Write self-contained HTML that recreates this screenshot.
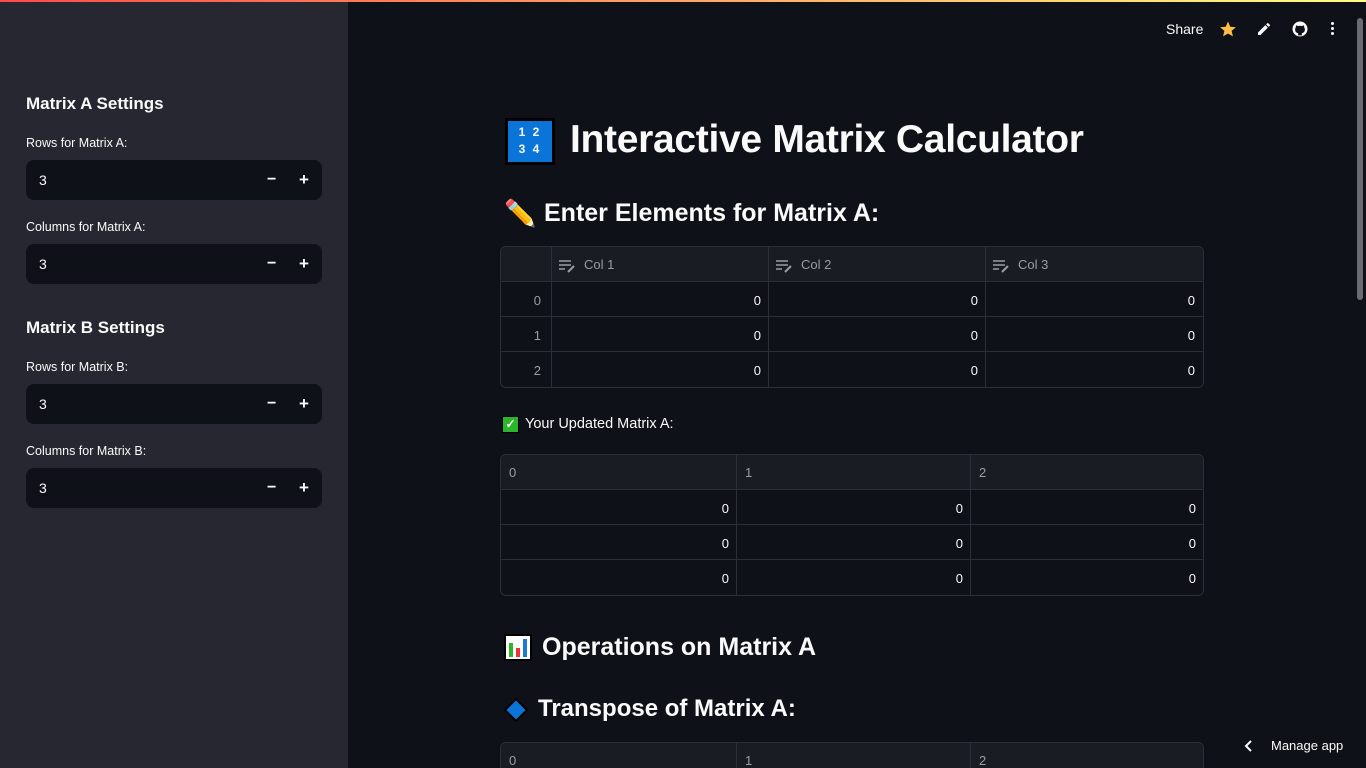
<!DOCTYPE html>
<html><head><meta charset="utf-8"><style>
*{box-sizing:border-box;margin:0;padding:0}
html,body{width:1366px;height:768px;overflow:hidden}
body{background:#0e1117;font-family:"Liberation Sans",sans-serif;color:#fafafa;position:relative}
.a{position:absolute}
.top{left:0;top:0;width:1366px;height:2px;background:linear-gradient(90deg,#ff4b4b,#fffd80)}
.side{left:0;top:2px;width:348px;height:766px;background:#262730}
.sh{font-weight:bold;font-size:17px;left:26px}
.lb{font-size:12.5px;left:26px}
.inp{left:26px;width:296px;height:40px;background:#0e1117;border-radius:8px}
.inp .v{position:absolute;left:13px;top:12px;font-size:14px}
.inp .m{position:absolute;left:241px;top:11px;font-size:16px;font-weight:bold}
.inp .p{position:absolute;left:273px;top:10px;font-size:17px;font-weight:bold}
.tbl{border:1px solid #2c2e38;border-radius:6px;overflow:hidden}
.row{position:absolute;left:0;height:35px;width:100%;border-top:1px solid #2c2e38}
.c{position:absolute;top:0;height:35px;border-left:1px solid #2c2e38;font-size:13px;line-height:37px}
.hd{background:#1a1c23;color:#9b9da6}
.num{text-align:right;padding-right:8px}
</style></head><body>
<div class="a top"></div>
<div class="a side"></div>
<div class="a sh" style="top:94px">Matrix A Settings</div>
<div class="a lb" style="top:136px">Rows for Matrix A:</div>
<div class="a inp" style="top:160px"><span class="v">3</span><span class="m">−</span><span class="p">+</span></div>
<div class="a lb" style="top:220px">Columns for Matrix A:</div>
<div class="a inp" style="top:244px"><span class="v">3</span><span class="m">−</span><span class="p">+</span></div>
<div class="a sh" style="top:318px">Matrix B Settings</div>
<div class="a lb" style="top:360px">Rows for Matrix B:</div>
<div class="a inp" style="top:384px"><span class="v">3</span><span class="m">−</span><span class="p">+</span></div>
<div class="a lb" style="top:444px">Columns for Matrix B:</div>
<div class="a inp" style="top:468px"><span class="v">3</span><span class="m">−</span><span class="p">+</span></div>

<div class="a" style="left:1166px;top:21px;font-size:14px">Share</div>
<svg class="a" style="left:1219px;top:20px" width="18" height="18" viewBox="0 0 24 24"><path fill="#ffbd45" d="M12 2l3 7 7.5.6-5.7 4.9 1.8 7.4L12 18l-6.6 3.9 1.8-7.4L1.5 9.6 9 9z"/></svg>
<svg class="a" style="left:1256px;top:21px" width="16" height="16" viewBox="0 0 24 24"><path fill="#fafafa" d="M3 17.25V21h3.75L17.8 9.94l-3.75-3.75zM20.7 7.04a1 1 0 000-1.41l-2.34-2.34a1 1 0 00-1.41 0l-1.83 1.83 3.75 3.75z"/></svg>
<svg class="a" style="left:1291px;top:20px" width="18" height="18" viewBox="0 0 24 24"><circle cx="12" cy="12" r="10" fill="#fafafa"/><path fill="#0e1117" d="M9.5 20.5v-3c-2.5-.5-4-2-4-5 0-1.2.4-2.2 1.1-3-.2-.6-.2-1.5.1-2.4 1 0 2 .6 2.6 1.1a8 8 0 015.4 0c.6-.5 1.6-1.1 2.6-1.1.3.9.3 1.8.1 2.4.7.8 1.1 1.8 1.1 3 0 3-1.5 4.5-4 5v3z"/></svg>
<div class="a" style="left:1331px;top:22px;width:4px">
<div style="width:3px;height:3px;background:#fafafa;border-radius:2px;margin-bottom:2px"></div><div style="width:3px;height:3px;background:#fafafa;border-radius:2px;margin-bottom:2px"></div><div style="width:3px;height:3px;background:#fafafa;border-radius:2px"></div></div>
<div class="a" style="left:1357px;top:18px;width:6px;height:282px;background:#6b6c72;border-radius:3px"></div>

<div class="a" style="left:505px;top:118px;width:50px;height:47px;background:#000;padding:3px"><div style="width:44px;height:41px;background:#0a74d8;font-size:12px;font-weight:bold;text-align:center;line-height:17px;padding-top:3px;letter-spacing:2px">1 2<br>3 4</div></div>
<div class="a" style="left:570px;top:118px;font-size:39px;font-weight:bold;letter-spacing:-.3px">Interactive Matrix Calculator</div>
<div class="a" style="left:504px;top:198px;font-size:26px">✏️</div>
<div class="a" style="left:544px;top:199px;font-size:25px;font-weight:bold">Enter Elements for Matrix A:</div>

<div class="a tbl" style="left:500px;top:246px;width:704px;height:142px">
<div class="row hd" style="top:-1px;border-top:0">
 <div class="c" style="left:0;width:51px;border-left:0"></div>
 <div class="c" style="left:50px;width:218px;padding-left:32px">Col 1</div>
 <div class="c" style="left:267px;width:218px;padding-left:32px">Col 2</div>
 <div class="c" style="left:484px;width:218px;padding-left:32px">Col 3</div>
</div>
<div class="row" style="top:34px"><div class="c hd" style="left:0;width:50px;border-left:0;background:none;text-align:right;padding-right:10px">0</div><div class="c num" style="left:50px;width:218px">0</div><div class="c num" style="left:267px;width:218px">0</div><div class="c num" style="left:484px;width:218px">0</div></div>
<div class="row" style="top:69px"><div class="c hd" style="left:0;width:50px;border-left:0;background:none;text-align:right;padding-right:10px">1</div><div class="c num" style="left:50px;width:218px">0</div><div class="c num" style="left:267px;width:218px">0</div><div class="c num" style="left:484px;width:218px">0</div></div>
<div class="row" style="top:104px"><div class="c hd" style="left:0;width:50px;border-left:0;background:none;text-align:right;padding-right:10px">2</div><div class="c num" style="left:50px;width:218px">0</div><div class="c num" style="left:267px;width:218px">0</div><div class="c num" style="left:484px;width:218px">0</div></div>
</div>
<svg class="a" style="left:558px;top:259px" width="18" height="14" viewBox="0 0 18 14"><path stroke="#9b9da6" stroke-width="1.5" d="M1 2h12M1 6h12M1 10h6"/><path stroke="#9b9da6" stroke-width="2" d="M10 13l6-6"/></svg>
<svg class="a" style="left:775px;top:259px" width="18" height="14" viewBox="0 0 18 14"><path stroke="#9b9da6" stroke-width="1.5" d="M1 2h12M1 6h12M1 10h6"/><path stroke="#9b9da6" stroke-width="2" d="M10 13l6-6"/></svg>
<svg class="a" style="left:992px;top:259px" width="18" height="14" viewBox="0 0 18 14"><path stroke="#9b9da6" stroke-width="1.5" d="M1 2h12M1 6h12M1 10h6"/><path stroke="#9b9da6" stroke-width="2" d="M10 13l6-6"/></svg>

<div class="a" style="left:502px;top:416px;width:17px;height:17px;background:#2bb52b;border:1px solid #000;color:#fff;font-size:12px;text-align:center;line-height:15px;font-weight:bold">✓</div>
<div class="a" style="left:525px;top:416px;font-size:14.5px">Your Updated Matrix A:</div>

<div class="a tbl" style="left:500px;top:454px;width:704px;height:142px">
<div class="row hd" style="top:-1px;border-top:0"><div class="c" style="left:0;width:236px;border-left:0;padding-left:8px">0</div><div class="c" style="left:235px;width:235px;padding-left:8px">1</div><div class="c" style="left:469px;width:235px;padding-left:8px">2</div></div>
<div class="row" style="top:34px"><div class="c num" style="left:0;width:236px;border-left:0">0</div><div class="c num" style="left:235px;width:235px">0</div><div class="c num" style="left:469px;width:234px">0</div></div>
<div class="row" style="top:69px"><div class="c num" style="left:0;width:236px;border-left:0">0</div><div class="c num" style="left:235px;width:235px">0</div><div class="c num" style="left:469px;width:234px">0</div></div>
<div class="row" style="top:104px"><div class="c num" style="left:0;width:236px;border-left:0">0</div><div class="c num" style="left:235px;width:235px">0</div><div class="c num" style="left:469px;width:234px">0</div></div>
</div>

<svg class="a" style="left:504px;top:634px" width="28" height="27" viewBox="0 0 28 27"><rect x="1" y="1" width="26" height="25" fill="#fff" stroke="#000" stroke-width="2"/><rect x="5" y="9" width="4" height="14" fill="#2bb52b"/><rect x="12" y="14" width="4" height="9" fill="#e33"/><rect x="19" y="5" width="4" height="18" fill="#1a7ad8"/></svg>
<div class="a" style="left:542px;top:633px;font-size:25px;font-weight:bold">Operations on Matrix A</div>
<svg class="a" style="left:504px;top:698px" width="24" height="24" viewBox="0 0 24 24"><path d="M12 1l11 11-11 11L1 12z" fill="#0a74d8" stroke="#000" stroke-width="2"/></svg>
<div class="a" style="left:538px;top:695px;font-size:24px;font-weight:bold">Transpose of Matrix A:</div>

<div class="a tbl" style="left:500px;top:742px;width:704px;height:40px;border-bottom:0">
<div class="row hd" style="top:-1px;border-top:0"><div class="c" style="left:0;width:236px;border-left:0;padding-left:8px">0</div><div class="c" style="left:235px;width:235px;padding-left:8px">1</div><div class="c" style="left:469px;width:235px;padding-left:8px">2</div></div>
</div>
<div class="a" style="left:1230px;top:726px;width:136px;height:42px;background:#0e1117"></div>
<svg class="a" style="left:1243px;top:739px" width="12" height="14" viewBox="0 0 12 14"><path d="M8 2L3 7l5 5" stroke="#fafafa" stroke-width="2" fill="none"/></svg>
<div class="a" style="left:1271px;top:738px;font-size:13px">Manage app</div>
</body></html>
